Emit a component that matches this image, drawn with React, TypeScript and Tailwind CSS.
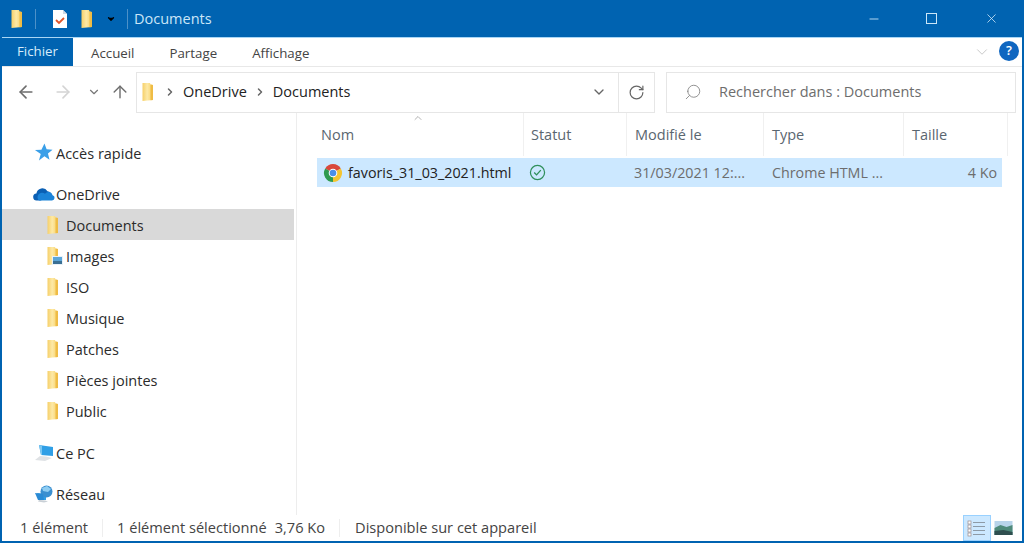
import { ArrowLeft, ArrowRight, ArrowUp, ChevronDown, ChevronRight, ChevronUp, RotateCw, Search, Minus, X } from "lucide-react";

const FONT = "font-['Open_Sans','Noto_Sans',sans-serif]";

function Folder({ className = "" }: { className?: string }) {
  return (
    <svg viewBox="0 0 14 20" className={className}>
      <defs>
        <linearGradient id="folderFill" x1="0" x2="1" y1="0" y2="0">
          <stop offset="0" stopColor="#f6d06a" />
          <stop offset="0.45" stopColor="#fde9a6" />
          <stop offset="1" stopColor="#f7cf62" />
        </linearGradient>
      </defs>
      <path d="M1.500 1h7.500l0.500 1.500 2.500 0.500v15l-10.500 1z" fill="url(#folderFill)" />
      <path d="M9.500 2.500l2.500 0.500v15l-2.500 0.200z" fill="#efbc45" />
    </svg>
  );
}

function Doc() {
  return (
    <svg viewBox="0 0 16 18" className="w-[16px] h-[18px]">
      <path d="M1 0h10l4 4v14H1z" fill="#fff" />
      <path d="M11 0l4 4h-4z" fill="#cfd8e3" />
      <path d="M4 10l3 3 5-5" fill="none" stroke="#e0552b" strokeWidth="1.800" />
    </svg>
  );
}

function StarIcon() {
  return (
    <svg viewBox="0 0 20 20" className="w-[19px] h-[19px]">
      <path d="M11 0.500l2.300 6.200 6.200 0.300-4.800 4 1.600 6.500-5.300-3.600-5.800 4.600 1.900-6.900L1 7.300l6.800-0.300z" fill="#3a9fe8" />
    </svg>
  );
}

function CloudIcon() {
  return (
    <svg viewBox="0 0 22 14" className="w-[22px] h-[14px]">
      <path d="M4 13.500a3.500 3.500 0 0 1-.6-7A6 6 0 0 1 14.500 4.200a4.600 4.600 0 0 1 3.200 1.600L8 13.500z" fill="#0a5fb4" />
      <path d="M6 13.500h13a2.700 2.700 0 0 0 .6-5.300 4.200 4.200 0 0 0-7.600-1.400A3.600 3.600 0 0 0 6 13.500z" fill="#1b83d8" />
    </svg>
  );
}

function PcIcon() {
  return (
    <svg viewBox="0 0 20 18" className="w-[20px] h-[18px]">
      <path d="M5 1l14 2v9L7 11z" fill="#2f9fe6" />
      <path d="M5 1l3 1v9l-1 0z" fill="#7cc7f2" />
      <path d="M6 12l6 0.500 6 1.500-7 3-10-1z" fill="#dfe2e5" />
    </svg>
  );
}

function NetworkIcon() {
  return (
    <svg viewBox="0 0 20 18" className="w-[20px] h-[18px]">
      <path d="M3 8l9 1v6H6z" fill="#2f9fe6" />
      <circle cx="12.500" cy="6.500" r="6" fill="#3a8fd0" />
      <path d="M8 3l5-2 4 3-3 3-5-1z" fill="#8fcdf2" />
      <path d="M1 8l8 1 1 6-6 0z" fill="#2a8ad4" />
      <path d="M5 15l6 0.500 3 1-4 1-6-1z" fill="#c9d0d6" />
    </svg>
  );
}

function ImagesFolder() {
  return (
    <span className="relative w-[20px] h-[20px] flex justify-start">
      <Folder className="w-[14px] h-[20px]" />
      <svg viewBox="0 0 11 9" className="absolute left-[6px] bottom-[1px] w-[11px] h-[9px]">
        <rect width="11" height="9" fill="#e8f1f8" />
        <rect x="1" y="1" width="9" height="4" fill="#5aa5d8" />
        <rect x="1" y="5" width="9" height="3" fill="#3a6f93" />
      </svg>
    </span>
  );
}

function Chrome() {
  return (
    <svg viewBox="0 0 20 20" className="w-[20px] h-[20px]">
      <path d="M10 10L2.200 5.500A9 9 0 0 1 17.800 5.500z" fill="#d9483b" />
      <path d="M10 10L17.800 5.500A9 9 0 0 1 10 19z" fill="#f4c430" />
      <path d="M10 10L10 19A9 9 0 0 1 2.200 5.500z" fill="#2f9a4f" />
      <circle cx="10" cy="10" r="4.300" fill="#fff" />
      <circle cx="10" cy="10" r="3.300" fill="#4a8fe8" />
    </svg>
  );
}

function DetailsView() {
  return (
    <svg viewBox="0 0 20 18" className="w-[20px] h-[18px]">
      {[2, 6, 10, 14].map((y) => (
        <g key={y}>
          <rect x="1" y={y} width="3" height="3" fill="#fff" stroke="#9a8c8c" strokeWidth="0.700" />
          <rect x="6" y={y + 1} width="12" height="1" fill="#8d9aa6" />
        </g>
      ))}
    </svg>
  );
}

function NavRow({ icon, label, selected = false, sub = false, gapClass = "" }: { icon: React.ReactNode; label: string; selected?: boolean; sub?: boolean; gapClass?: string }) {
  return (
    <div className={`flex items-center h-[31px] ${gapClass} ${selected ? "bg-[#d9d9d9]" : ""} ${sub ? "pl-[44px]" : "pl-[29px]"}`}>
      <span className={`flex items-center shrink-0 ${sub ? "w-[20px] justify-start" : "w-[25px] justify-center"}`}>{icon}</span>
      <span className="text-[14.5px] text-[#2b2b2b] pt-[2px]">{label}</span>
    </div>
  );
}

function ColHead({ label, className }: { label: string; className: string }) {
  return (
    <div className={`h-[43px] flex items-center border-r border-[#f0f0f0] text-[14.5px] text-[#5a6670] ${className}`}>
      {label}
    </div>
  );
}

export default function App() {
  const folder = <Folder className="w-[14px] h-[20px]" />;

  return (
    <div className={`${FONT} w-[1024px] h-[543px] overflow-hidden flex flex-col bg-white border-x-2 border-b-2 border-[#0063b1]`}>
      {/* barre de titre */}
      <header className="h-[37px] shrink-0 bg-[#0063b1] flex items-center -mx-[2px] px-[2px]">
        <span className="ml-[8px]"><Folder className="w-[14px] h-[20px]" /></span>
        <span className="w-px h-[20px] bg-[#4d91c8] ml-[11px] mr-[16px]" />
        <Doc />
        <span className="ml-[12px]"><Folder className="w-[14px] h-[20px]" /></span>
        <ChevronDown className="w-[10px] h-[10px] ml-[12px] text-black fill-black" strokeWidth={3} />
        <span className="w-px h-[20px] bg-[#4d91c8] ml-[11px] mr-[6px]" />
        <span className="text-[14.5px] text-[#cbe6f8]">Documents</span>
        <div className="ml-auto flex items-center text-[#cbe6f8]">
          <Minus className="w-[14px] h-[14px]" strokeWidth={1.5} />
          <span className="w-[11px] h-[11px] border border-[#cbe6f8] ml-[45px]" />
          <X className="w-[15px] h-[15px] ml-[47px] mr-[23px]" strokeWidth={1.3} />
        </div>
      </header>

      {/* onglets */}
      <nav className="h-[30px] shrink-0 flex items-center border-t border-[#a9d6f5] border-b-[#e8e8e8] border-b text-[13.3px] text-[#444]">
        <div className="w-[71px] h-full bg-[#0063b1] text-[#d7ecfa] flex items-center justify-center -mt-px">Fichier</div>
        <span className="ml-[18px] pt-[3px]">Accueil</span>
        <span className="ml-[35px] pt-[3px]">Partage</span>
        <span className="ml-[35px] pt-[3px]">Affichage</span>
        <ChevronDown className="ml-auto w-[18px] h-[18px] text-[#b5b5b5] mr-[8px]" strokeWidth={1} />
        <span className="w-[20px] h-[20px] rounded-full bg-[#0f66c0] text-white text-[13px] font-semibold flex items-center justify-center mr-[3px] -mt-[2px]">?</span>
      </nav>

      {/* adresse */}
      <div className="h-[46px] shrink-0 flex items-center pl-[14px] pr-[6px] pt-[4px]">
        <ArrowLeft className="w-[20px] h-[20px] text-[#6e6e6e]" strokeWidth={2} />
        <ArrowRight className="w-[20px] h-[20px] text-[#d4d4d4] ml-[17px]" strokeWidth={2} />
        <ChevronDown className="w-[14px] h-[14px] text-[#777] ml-[14px]" strokeWidth={2} />
        <ArrowUp className="w-[20px] h-[20px] text-[#6e6e6e] ml-[9px]" strokeWidth={1.7} />
        <div className="ml-[6px] h-[41px] w-[519px] border border-[#e6e6e6] flex items-center">
          <span className="ml-[4px]"><Folder className="w-[14px] h-[20px]" /></span>
          <ChevronRight className="w-[12px] h-[12px] text-[#666] ml-[9px]" strokeWidth={3} />
          <span className="text-[14.5px] text-[#222] ml-[7px]">OneDrive</span>
          <ChevronRight className="w-[12px] h-[12px] text-[#666] ml-[7px]" strokeWidth={3} />
          <span className="text-[14.5px] text-[#222] ml-[7px]">Documents</span>
          <ChevronDown className="w-[16px] h-[16px] text-[#666] ml-auto mr-[11px]" strokeWidth={2} />
          <div className="w-[36px] h-full border-l border-[#e6e6e6] flex items-center justify-center">
            <RotateCw className="w-[17px] h-[17px] text-[#666]" strokeWidth={1.7} />
          </div>
        </div>
        <div className="ml-[11px] h-[41px] flex-1 border border-[#e6e6e6] flex items-center">
          <Search className="w-[18px] h-[18px] text-[#888] ml-[17px] -scale-x-100" strokeWidth={1.2} />
          <span className="text-[14.5px] text-[#6d6d6d] ml-[17px]">Rechercher dans : Documents</span>
        </div>
      </div>

      <div className="flex-1 flex min-h-0">
        {/* volet de navigation */}
        <aside className="w-[292px] shrink-0 pt-[24px]">
          <NavRow icon={<StarIcon />} label="Accès rapide" gapClass="mb-[10px]" />
          <NavRow icon={<CloudIcon />} label="OneDrive" />
          <NavRow icon={folder} label="Documents" sub selected />
          <NavRow icon={<ImagesFolder />} label="Images" sub />
          <NavRow icon={folder} label="ISO" sub />
          <NavRow icon={folder} label="Musique" sub />
          <NavRow icon={folder} label="Patches" sub />
          <NavRow icon={folder} label="Pièces jointes" sub />
          <NavRow icon={folder} label="Public" sub gapClass="mb-[11px]" />
          <NavRow icon={<PcIcon />} label="Ce PC" gapClass="mb-[10px]" />
          <NavRow icon={<NetworkIcon />} label="Réseau" />
        </aside>

        {/* liste des fichiers */}
        <main className="flex-1 border-l border-[#ededed] ml-[2px] pl-[20px] pr-[13px] min-w-0">
          <div className="flex relative">
            <ChevronUp className="absolute left-[95px] -top-[1px] w-[12px] h-[12px] text-[#999]" strokeWidth={1.5} />
            <ColHead label="Nom" className="w-[207px] pl-[4px]" />
            <ColHead label="Statut" className="w-[103px] pl-[7px]" />
            <ColHead label="Modifié le" className="w-[137px] pl-[8px]" />
            <ColHead label="Type" className="w-[140px] pl-[8px]" />
            <ColHead label="Taille" className="w-[104px] pl-[8px]" />
          </div>
          <div className="mt-[2px] h-[29px] w-[685px] bg-[#cce8ff] flex items-center text-[14.3px]">
            <span className="ml-[6px]"><Chrome /></span>
            <span className="ml-[5px] w-[175px] text-[#222] pt-[1px]">favoris_31_03_2021.html</span>
            <svg viewBox="0 0 18 18" className="w-[17px] h-[17px] ml-[6px]">
              <circle cx="9" cy="9" r="7.500" fill="none" stroke="#2f8f5b" strokeWidth="1.300" />
              <path d="M5.500 9l2.500 2.500 4.500-5" fill="none" stroke="#2f8f5b" strokeWidth="1.400" />
            </svg>
            <span className="ml-[88px] w-[138px] text-[#6d6d6d] whitespace-nowrap pt-[1px]">31/03/2021 12:...</span>
            <span className="w-[120px] text-[#6d6d6d] whitespace-nowrap pt-[1px]">Chrome HTML ...</span>
            <span className="flex-1 text-right pr-[5px] text-[#6d6d6d] pt-[1px]">4 Ko</span>
          </div>
        </main>
      </div>

      {/* barre d'état */}
      <footer className="h-[26px] shrink-0 flex items-center text-[14.6px] text-[#444] pl-[18px]">
        <span className="pb-[1px]">1 élément</span>
        <span className="w-px h-[18px] bg-[#eeeeee] ml-[14px] mr-[14px]" />
        <span className="pb-[1px]">1 élément sélectionné</span>
        <span className="ml-[8px] pb-[1px]">3,76 Ko</span>
        <span className="w-px h-[18px] bg-[#eeeeee] ml-[14px] mr-[15px]" />
        <span className="pb-[1px]">Disponible sur cet appareil</span>
        <div className="ml-auto flex items-center h-full mr-[9px]">
          <span className="w-[28px] h-full bg-[#cce8ff] border border-[#99d1ff] flex items-center justify-center"><DetailsView /></span>
          <svg viewBox="0 0 18 14" className="w-[19px] h-[14px] ml-[3px]">
            <rect width="18" height="14" fill="#b8d4ea" />
            <path d="M0 7l6-3 6 2 6-2v10H0z" fill="#4e8a7a" />
            <path d="M0 10l9-1 9 2v3H0z" fill="#2f4f4f" />
          </svg>
        </div>
      </footer>
    </div>
  );
}
